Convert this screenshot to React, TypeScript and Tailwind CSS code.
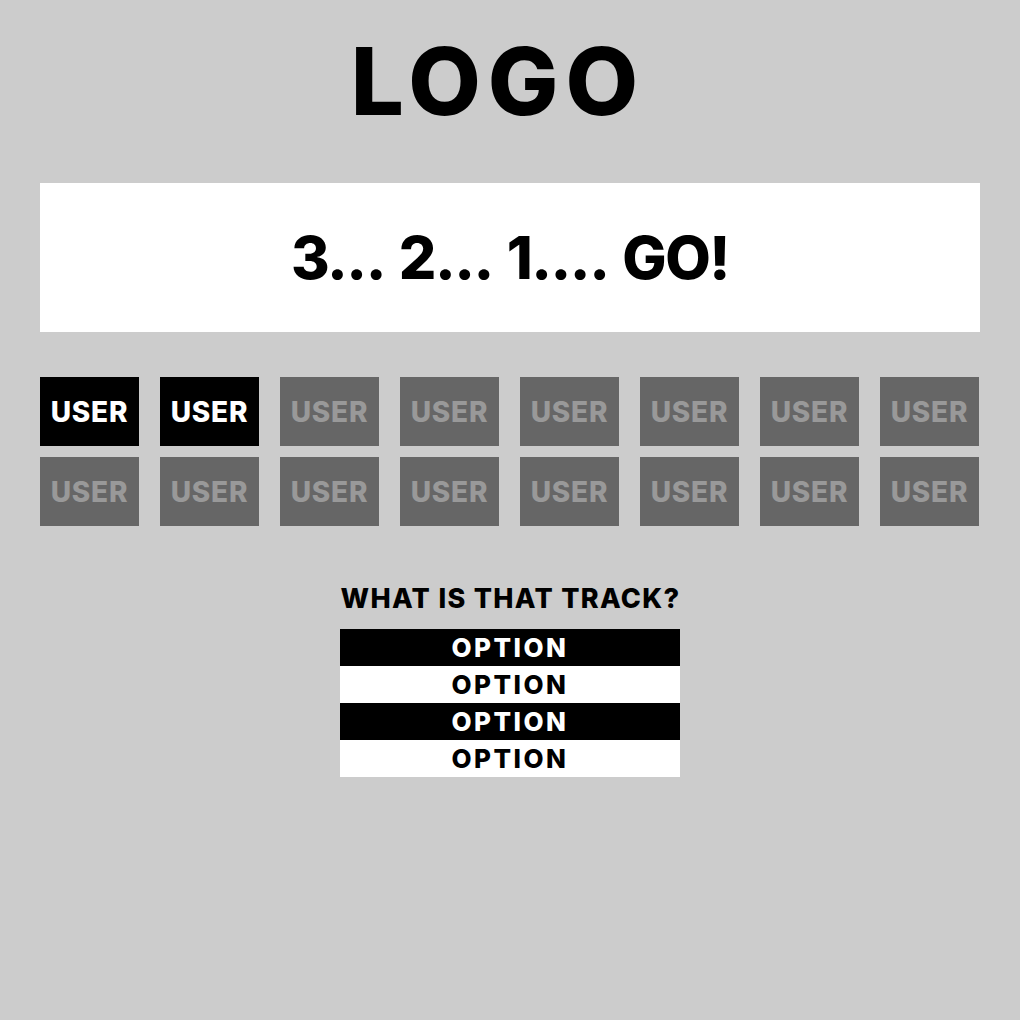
const users = Array.from({ length: 16 }, (_, i) => i);
const options = ["OPTION", "OPTION", "OPTION", "OPTION"];

export default function App() {
  return (
    <div
      className="min-h-[1020px] w-full bg-[#cccccc] px-10 pt-[27px]"
      style={{ fontFamily: "Inter, 'Noto Sans', sans-serif" }}
    >
      {/* Logo */}
      <div className="flex justify-center pr-[24px]">
        <h1 className="text-[94px] font-extrabold leading-[108px] tracking-[7px] text-black">LOGO</h1>
      </div>

      {/* Countdown */}
      <div className="mt-[48px] flex h-[149px] items-center justify-center bg-white">
        <span className="text-[59px] font-extrabold leading-none tracking-[-1.5px] text-black [word-spacing:5px]">
          3... 2... 1.... GO!
        </span>
      </div>

      {/* Users */}
      <div className="mt-[45px] flex flex-wrap gap-x-[21px] gap-y-[11px]">
        {users.map((i) => (
          <div
            key={i}
            className={`flex h-[69px] w-[99px] items-center justify-center text-[28px] font-extrabold tracking-[0.8px] ${
              i < 2 ? "bg-black text-white" : "bg-[#666666] text-[#999999]"
            }`}
          >
            USER
          </div>
        ))}
      </div>

      {/* Question */}
      <div className="mt-[56px] flex flex-col items-center">
        <p className="pl-[1px] text-[27px] font-extrabold leading-[34px] tracking-[1.3px] text-black">
          WHAT IS THAT TRACK?
        </p>
        <div className="mt-[13px] flex w-[340px] flex-col">
          {options.map((o, i) => (
            <div
              key={i}
              className={`flex h-[37px] items-center justify-center text-[26px] font-extrabold tracking-[2.5px] ${
                i % 2 === 0 ? "bg-black text-white" : "bg-white text-black"
              }`}
            >
              {o}
            </div>
          ))}
        </div>
      </div>
    </div>
  );
}
